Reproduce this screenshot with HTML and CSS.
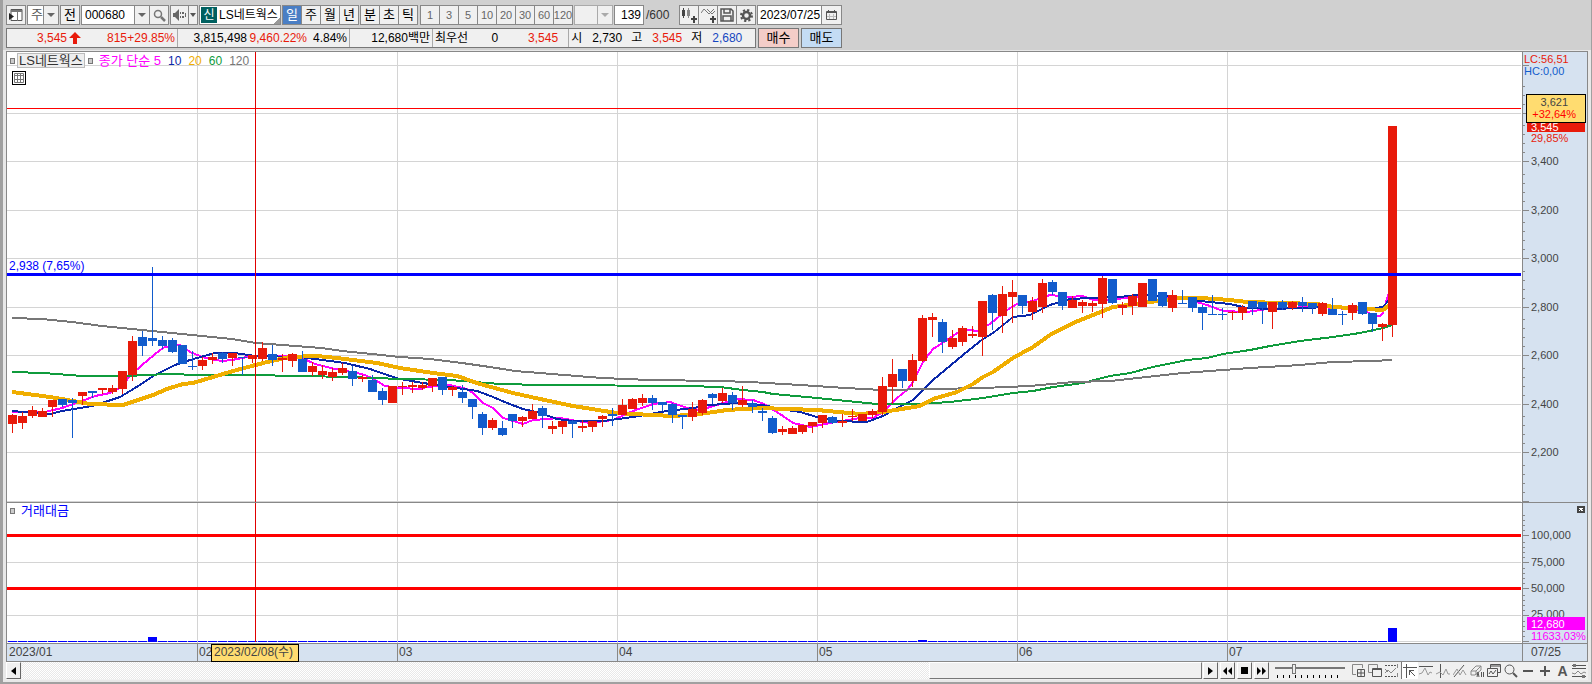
FILE: index.html
```
<!DOCTYPE html>
<html lang="ko">
<head>
<meta charset="utf-8">
<title>LS네트웍스 차트</title>
<link rel="stylesheet" href="styles.css">
</head>
<body>
<div class="window">
<header class="toolbar">
  <div class="row">
    <button class="btn" aria-label="패널"><svg width="14" height="14" viewBox="0 0 14 14"><path d="M2 1.500h11v11H2z" fill="#fff" stroke="#555"/><path d="M2 2h11v2H2zM8 4h1v9H8z" fill="#777"/><path d="M0 5l5 3.500-5 3.500z" fill="#222"/></svg></button>
    <label class="pick pick-unit"><select aria-label="구분"><option>주</option></select></label>
    <button class="btn">전</button>
    <div class="group">
      <label class="pick pick-code"><input class="code" type="text" value="000680" aria-label="종목코드"></label>
      <button class="btn" aria-label="검색"><svg width="13" height="13" viewBox="0 0 13 13" fill="none" stroke="#777"><circle cx="5" cy="5" r="3.500" stroke-width="1.500"/><path d="M8 8l4 4" stroke-width="2.500"/></svg></button>
    </div>
    <div class="group">
      <button class="btn btn-sound" aria-label="소리"><svg width="13" height="12" viewBox="0 0 13 12" fill="#666"><path d="M0 4h2l4-4v12L2 8H0zM7 3h1v2H7zM7 7h1v2H7zM9 3h2v2H9zM9 7h2v2H9zM12 4h1v4h-1z"/></svg></button>
      <button class="btn btn-drop" aria-label="소리 메뉴"><i class="tri"></i></button>
    </div>
    <div class="name"><b>신</b><span>LS네트웍스</span></div>
    <div class="group period">
      <button class="btn on">일</button><button class="btn">주</button><button class="btn">월</button><button class="btn">년</button>
    </div>
    <div class="group period">
      <button class="btn">분</button><button class="btn">초</button><button class="btn">틱</button>
    </div>
    <div class="group minutes">
      <button class="btn">1</button><button class="btn">3</button><button class="btn">5</button><button class="btn">10</button><button class="btn">20</button><button class="btn">30</button><button class="btn">60</button><button class="btn">120</button>
    </div>
    <label class="pick pick-off"><select disabled aria-label="분 선택"><option></option></select></label>
    <input class="count" type="text" value="139" aria-label="봉 개수">
    <span class="total">/600</span>
    <div class="group">
      <button class="btn" aria-label="봉 추가"><svg width="15" height="15" viewBox="0 0 15 15" fill="#444"><path d="M0 2h3v6H0zM1 0h1v10H1zM11 8h2v2h2v2h-2v3h-2v-3H9v-2h2z"/><path d="M5 2h3v6H5zM6 0h1v10H6z" fill="#888"/></svg></button>
      <button class="btn" aria-label="지표 추가"><svg width="15" height="15" viewBox="0 0 15 15" fill="none" stroke="#777"><path d="M0 5l3-4 5 5 5-5M6 1l5 5 3-3"/><path d="M11 8h2v2h2v2h-2v3h-2v-3H9v-2h2z" fill="#444" stroke="none"/></svg></button>
      <button class="btn" aria-label="저장"><svg width="14" height="14" viewBox="0 0 14 14" fill="none" stroke="#555" stroke-width="1.500"><path d="M1 1h10l2 2v10H1zM4 1v4h6V1M3 13V8h8v5"/></svg></button>
      <button class="btn" aria-label="설정"><svg width="13" height="13" viewBox="0 0 13 13" fill="none" stroke="#555"><circle cx="6.500" cy="6.500" r="3.500" stroke-width="2.500"/><circle cx="6.500" cy="6.500" r="5.500" stroke-width="2" stroke-dasharray="2.200 2.120"/></svg></button>
    </div>
    <div class="group date">
      <input type="text" value="2023/07/25" aria-label="날짜">
      <button class="btn" aria-label="달력"><svg width="11" height="10" viewBox="0 0 11 10" fill="none" stroke="#555"><path d="M.5 1.500h10v8H.5zM0 2.500h11M2.500 0v2M8.500 0v2"/><path d="M3.500 4v5M7.500 4v5M1 6.500h9" stroke="#bbb"/></svg></button>
    </div>
  </div>
  <div class="row">
    <div class="quote">
      <div class="cell"><span class="w60 up">3,545</span><svg class="arrow" width="12" height="12" viewBox="0 0 12 12"><path d="M6 0l6 6H8v6H4V6H0z" fill="#e81a0a"/></svg><span class="w44 up">815</span><span class="w48 up">+29.85%</span></div>
      <div class="cell"><span class="w70">3,815,498</span><span class="w60 up">9,460.22%</span><span class="w40">4.84%</span></div>
      <div class="cell"><span class="w80">12,680백만</span></div>
      <div class="cell bid"><span>최우선</span><span class="w30">0</span><span class="w60 up">3,545</span></div>
      <div class="cell ohl"><span>시</span><span class="w40">2,730</span><span>고</span><span class="w40 up">3,545</span><span>저</span><span class="w40 down">2,680</span></div>
    </div>
    <button class="trade buy">매수</button>
    <button class="trade sell">매도</button>
  </div>
</header>

<main class="chart">
  <section class="plot">
    <svg id="price" height="450" viewBox="7 52 1515 450" preserveAspectRatio="none"></svg>
    <div class="legend"><i class="dot"></i><span class="tag">LS네트웍스</span><i class="dot"></i><span class="ma5">종가 단순 5</span><span class="ma ma10">10</span><span class="ma ma20">20</span><span class="ma ma60">60</span><span class="ma ma120">120</span></div>
    <button class="sheet" aria-label="표"><svg width="10" height="10" viewBox="0 0 10 10" fill="none" stroke="#777"><path d="M.5.5h9v9h-9zM0 2.500h10M0 6.500h10M3.500 0v10M6.500 0v10"/></svg></button>
    <span class="level">2,938 (7,65%)</span>
  </section>
  <svg class="axis" id="priceAxis" width="64" height="450" viewBox="1523 52 64 450"></svg>
  <section class="plot second">
    <svg id="volume" height="140" viewBox="7 503 1515 140" preserveAspectRatio="none"></svg>
    <div class="legend"><i class="dot"></i><span class="vol">거래대금</span></div>
  </section>
  <svg class="axis second" id="volumeAxis" width="64" height="140" viewBox="1523 503 64 140"></svg>
  <div class="months"><span class="m1">2023/01</span><span>02</span><span>03</span><span>04</span><span>05</span><span>06</span><span>07</span><b class="cursor">2023/02/08(수)</b></div>
  <div class="last">07/25</div>
</main>

<footer class="bottom">
  <div class="scroll">
    <button class="sb" aria-label="왼쪽"><svg width="5" height="8" viewBox="0 0 5 8"><path d="M5 0v8L0 4z"/></svg></button>
    <div class="track"><div class="thumb"></div></div>
    <button class="sb" aria-label="오른쪽"><svg width="5" height="8" viewBox="0 0 5 8"><path d="M0 0v8l5-4z"/></svg></button>
  </div>
  <button class="sb" aria-label="뒤로"><svg width="9" height="8" viewBox="0 0 9 8"><path d="M4 0v8L0 4zM9 0v8L5 4z"/></svg></button>
  <button class="sb" aria-label="정지"><svg width="7" height="7" viewBox="0 0 7 7"><path d="M0 0h7v7H0z"/></svg></button>
  <button class="sb" aria-label="앞으로"><svg width="9" height="8" viewBox="0 0 9 8"><path d="M0 0v8l4-4zM5 0v8l4-4z"/></svg></button>
  <label class="speed"><input type="range" min="0" max="100" value="25" aria-label="속도"><i></i></label>
  <div class="tools">
    <button aria-label="창 추가"><svg viewBox="0 0 14 14"><path d="M5 10.500H1.500v-10h10V4" stroke="#888"/><path d="M6.500 5.500h7v7h-7zM10 6v7M7 9h7"/></svg></button>
    <button aria-label="창 겹치기"><svg viewBox="0 0 14 14"><path d="M4 8.500H.5v-8h9V4" stroke="#888"/><path d="M4.500 4.500h9v8h-9zM4 5.500h10"/></svg></button>
    <button aria-label="영역"><svg viewBox="0 0 14 14"><path d="M0 1.500h11M0 12.500h11" stroke-dasharray="2 1"/><path d="M12.500 0v4M12.500 9v4M0 9l3-3 3 3 5-5M0 5l3 3" stroke="#888"/></svg></button>
    <button class="pressed" aria-label="십자선"><svg viewBox="0 0 14 14"><path d="M0 3.500h14M3.500 0v14M6 6l6 6M6.500 11V6.500H11"/></svg></button>
    <button aria-label="수평선"><svg viewBox="0 0 14 14"><path d="M0 2.500h14"/><path d="M0 10l3-1 3-5 3 7 2-3 2 1" stroke="#999"/></svg></button>
    <button aria-label="수직선"><svg viewBox="0 0 14 14"><path d="M4.500 0v14"/><path d="M0 10l4-2 3 3 3-6 2 5 2 0" stroke="#999"/></svg></button>
    <button aria-label="추세선"><svg viewBox="0 0 14 14"><path d="M1 13L11 1"/><path d="M0 11l4-6 3 6 3-5 3 5" stroke="#999"/></svg></button>
    <button aria-label="전체 지우기"><svg viewBox="0 0 14 14"><path d="M1 7l5-5h5l-5 5zM1 7v4h4l6-5V2M6 7v4" stroke="#888"/><path d="M7 13l1-5 1 5M11.500 8v5M13.500 8v5"/></svg></button>
    <button aria-label="차트 겹침"><svg viewBox="0 0 14 14"><path d="M3.500 4V.5h10v8H11M.5 4.500h10v8H.5zM2 10l2-3 2 3 3-4"/><path d="M4 1h9v2H4z" fill="#999" stroke="none"/></svg></button>
    <button aria-label="돋보기"><svg viewBox="0 0 14 14"><circle cx="5.500" cy="5.500" r="4.500"/><path d="M9 9l4 4" stroke-width="2"/></svg></button>
    <button aria-label="축소"><svg viewBox="0 0 14 14"><path d="M2 7h10" stroke-width="2"/></svg></button>
    <button aria-label="확대"><svg viewBox="0 0 14 14"><path d="M2 7h10M7 2v10" stroke-width="2"/></svg></button>
    <button class="letter">A</button>
    <button aria-label="설정"><svg viewBox="0 0 14 14"><path d="M0 1.500h14M0 4.500h14M0 12.500h14" /><path d="M0 9l3 1 3-3 3 3 3-2 2 1" stroke="#888"/><path d="M1 0h3v3H1zM10 11h3v3h-3z" fill="#777" stroke="none"/></svg></button>
  </div>
</footer>
</div>
<script src="chart.js"></script>
</body>
</html>
```
FILE: styles.css
```
* { box-sizing: border-box; }
body {
  margin: 0;
  background: #f0f0f0;
  font: 12px/16px "Liberation Sans", "Noto Sans CJK KR", sans-serif;
  color: #000;
}
button, input, select { font: inherit; color: inherit; margin: 0; padding: 0; border-radius: 0; }
svg { display: block; flex: none; }

.window {
  display: flex;
  flex-direction: column;
  min-height: 100vh;
  border: solid #a0a0a0;
  border-width: 0 1px 2px 3px;
  background: #e8e8e8;
}

/* toolbar */
.toolbar {
  display: flex;
  flex-direction: column;
  gap: 3px;
  padding: 5px 3px 2px;
  border-bottom: 1px solid #e8e8e8;
  background: #d0d0d0;
  white-space: nowrap;
}
.row { display: flex; gap: 1px; height: 20px; }
.btn {
  display: flex;
  align-items: center;
  justify-content: center;
  flex: none;
  width: 20px;
  height: 20px;
  border: 1px solid #888;
  background: #f0f0f0;
}
.group { display: flex; }
.group > * + * { margin-left: -1px; }
.period, .pick-unit, .row > .btn { font-size: 13px; }
.group .on { background: #4a7ec4; color: #fff; }
.minutes { margin-left: 1px; color: #666; }
.minutes .btn { font-size: 11px; }
.pick { position: relative; display: block; border: 1px solid #888; background: #fff; }
.pick::after {
  content: "";
  position: absolute;
  right: 3px;
  top: 7px;
  border: 4px solid transparent;
  border-top: 4px solid #666;
}
.pick::before {
  content: "";
  position: absolute;
  right: 0;
  top: 0;
  width: 14px;
  height: 18px;
  border-left: 1px solid #888;
  background: #f0f0f0;
}
.pick select, .pick input { appearance: none; display: block; width: 100%; height: 18px; border: 0; background: none; padding-left: 3px; opacity: 1; }
.pick-unit { width: 32px; color: #555; }
.pick-code { width: 69px; }
.pick-off { width: 39px; background: #f0f0f0; border-color: #aaa; }
.pick-off::after { border-top-color: #aaa; }
.pick-off::before { border-color: #aaa; }
.btn-sound { width: 19px; }
.btn-drop { width: 10px; }
.tri { border: 3px solid transparent; border-top: 4px solid #555; border-bottom: 0; }
.name { display: flex; width: 82px; padding: 1px; border: 1px solid #888; background: linear-gradient(135deg, #fff 93%, #999 93%); }
.name b { width: 16px; background: #006060; color: #fff; font-weight: 400; text-align: center; }
.name span { padding-left: 2px; }
.count { width: 30px; border: 1px solid #888; background: #fff; text-align: right; padding-right: 2px; }
.total { width: 33px; padding: 2px 0 0 1px; color: #333; }
.date input { width: 65px; border: 1px solid #888; background: #fff; padding-left: 2px; }
.date .btn { width: 21px; }

.quote { display: flex; width: 750px; border: 1px solid #777; background: #f0f0f0; }
.cell { display: flex; align-items: center; padding-right: 2px; border-right: 1px solid #aaa; }
.cell:last-child { border: 0; }
.cell span { text-align: right; }
.w30 { width: 30px; }
.w40 { width: 40px; }
.w44 { width: 44px; }
.w48 { width: 48px; }
.w60 { width: 60px; }
.w70 { width: 69px; }
.w80 { width: 80px; }
.arrow { margin: 0 2px; }
.up { color: #e81a0a; }
.down { color: #1446c0; }
.bid { padding: 0 10px 0 2px; }
.ohl { padding-left: 2px; }
.ohl span:nth-child(odd):not(:first-child) { margin-left: 9px; }
.trade { width: 41px; border: 1px solid #777; margin-left: 1px; font-size: 13px; }
.buy { background: #f4cdc8; }
.sell { background: #c4dcf4; }

/* chart */
.chart {
  display: grid;
  grid-template-columns: minmax(0, 1fr) 65px;
  margin: 0 3px;
  border: 1px solid #888;
  background: #fff;
}
.plot { position: relative; }
.plot > svg { width: 100%; }
.axis { box-sizing: content-box; border-left: 1px solid #888; background: #d6e2f0; }
.second { border-top: 1px solid #888; }
.axis text { font-size: 11px; }
.legend {
  position: absolute;
  left: 3px;
  top: 1px;
  display: flex;
  align-items: center;
  font-size: 13px;
  line-height: 14px;
  white-space: nowrap;
}
.dot { width: 5px; height: 6px; border: 1px solid #777; background: #ccc; }
.tag { margin: 0 3px 0 2px; padding: 0 1px; border: 1px solid #bbb; background: #eee; line-height: 13px; color: #333; }
.ma { margin-left: 7px; font-size: 12px; }
.ma5 { margin-left: 6px; color: #f0f; }
.ma10 { color: #0a28aa; }
.ma20 { color: #f0ae00; }
.ma60 { color: #0f9b3c; }
.ma120 { color: #777; }
.vol { margin-left: 6px; color: #00f; }
.sheet { position: absolute; left: 5px; top: 19px; width: 14px; height: 14px; padding: 1px; border: 1px solid #000; background: #fff; }
.level { position: absolute; left: 2px; top: 206px; color: #00f; }
.months, .last { border-top: 1px solid #888; background: #d6e2f0; height: 18px; color: #444; line-height: 16px; }
.months { position: relative; display: grid; grid-template-columns: 190fr 200fr 220fr 200fr 200fr 210fr 295fr; }
.months span { padding-left: 1px; border-left: 1px solid #888; }
.months .m1 { border: 0; padding-left: 2px; }
.last { border-left: 1px solid #888; padding-left: 8px; }
.cursor { position: absolute; left: 204px; top: 0; width: 88px; height: 18px; border: 1px solid #000; background: #ffdc70; font-weight: 400; padding-left: 2px; line-height: 15px; white-space: nowrap; }

/* scroll bar and tools */
.bottom { display: flex; align-items: flex-start; gap: 2px; margin: 0 3px; height: 18px; background: #f0f0f0; }
.scroll { display: flex; flex: 1; gap: 1px; }
.track { flex: 1; background: repeating-conic-gradient(#e8e8e8 0 25%, #fff 0 50%) 0 0 / 2px 2px; }
.thumb { width: 273px; height: 17px; margin-left: auto; border: 1px solid; border-color: #fff #777 #777 #fff; background: #f0f0f0; }
.sb { display: flex; align-items: center; justify-content: center; width: 15px; height: 17px; border: 1px solid; border-color: #fff #666 #666 #fff; background: #f0f0f0; }
.speed { display: block; width: 70px; margin: 2px 3px 0 4px; }
.speed input { appearance: none; display: block; width: 70px; height: 10px; background: linear-gradient(#777, #777) 0 3px / 100% 2px no-repeat; }
.speed input::-webkit-slider-thumb { appearance: none; width: 4px; height: 10px; background: #eee; border: 1px solid #777; }
.speed i { display: block; height: 3px; margin: 1px 2px 0; background: repeating-linear-gradient(90deg, #000 0 1px, transparent 1px 6px); }
.tools { display: flex; flex: none; }
.tools button { width: 17px; height: 17px; padding: 1px; border: 0; background: none; }
.tools svg { width: 14px; height: 14px; fill: none; stroke: #555; }
.tools .pressed { background: #fff; border-left: 1px solid #777; }
.tools .letter { font: bold 14px "Liberation Sans", sans-serif; color: #555; }
```
FILE: chart.js
```
// Candle rows: direction, body top, body bottom, high, low
const candles = `R415,424,414,433 R416,423,412,429 R410,416,406,418 R411,417,408,417 R400,407,400,417 B399,405,399,407 B400,403,398,438 R392,396,392,405 B391,393,391,398 R388,390,388,394
R388,392,385,394 R371,389,371,394 R341,375,336,381 B337,346,331,356 B338,341,267,346 B340,346,336,349 B340,352,338,353 B345,364,345,364 B366,367,351,370 R360,366,357,370
R357,360,353,364 B353,359,352,363 R353,358,353,366 B357,358,357,375 R355,359,355,363 R348,359,342,361 B354,360,345,366 R358,360,354,372 R354,361,353,367 B359,372,351,372
R366,372,362,376 R371,375,365,379 R372,377,368,381 R368,373,363,375 B371,379,366,386 R377,379,375,382 B380,392,375,392 B391,400,388,405 R386,403,386,403 R386,387,382,395
R385,387,382,393 R385,388,382,390 R378,386,378,392 B377,390,377,395 R387,390,386,396 B392,398,385,403 B399,407,399,419 B414,428,412,435 R420,428,418,430 B428,435,421,436
B414,421,414,428 R417,421,416,427 R411,419,404,419 B408,416,406,428 R426,429,421,434 R421,427,421,434 B421,424,420,438 R426,428,420,432 R421,427,421,432 R416,419,415,427
B414,416,408,426 R405,415,399,415 R399,409,398,409 R398,403,394,406 B398,403,395,410 B402,405,402,411 B404,415,403,423 B415,417,415,429 R409,417,402,421 R400,413,399,415
B394,398,393,404 R393,401,388,403 B395,403,392,410 R400,405,386,407 B403,407,400,413 B411,413,408,421 B418,433,416,434 R429,432,426,435 R428,434,426,434 R425,432,425,434
R422,426,422,433 R415,423,415,428 B417,423,416,424 R421,423,414,427 R416,417,409,421 R414,421,414,421 R411,415,409,418 R386,412,377,415 R374,387,359,404 B369,381,369,388
R360,381,354,387 R318,361,315,362 R317,320,313,337 B322,342,319,353 R338,347,330,349 R328,342,326,346 R334,336,326,338 R301,337,301,356 B295,313,294,330 R294,316,286,333
R292,297,280,323 B295,306,295,314 R301,312,297,320 R283,307,279,313 B282,292,280,295 B292,306,292,310 R300,308,296,308 R302,306,300,313 R303,306,301,312 R278,304,276,318
B279,303,279,304 R305,308,302,315 R296,306,294,315 R283,307,283,307 B279,301,279,301 B292,306,292,307 R295,308,290,312 B303,304,290,304 B297,308,297,312 B307,313,305,330
B314,315,295,315 B314,315,308,320 R312,313,311,320 R307,313,305,320 B301,308,301,315 B302,308,302,324 R302,312,302,329 B302,308,300,310 R302,308,301,310 B302,306,297,312
B303,308,303,314 R303,314,302,316 B309,315,298,315 B314,315,311,325 R305,313,303,320 B302,314,302,315 B313,324,313,332 R324,327,323,341 R126,325,126,337`.split(/\s+/);

const averages = [
  ['#f0f', 2, '12,412 45,412 62,408 82,401 95,396 110,393 120,388 130,376 142,365 160,350 165,347 180,345 190,352 205,358 222,361 232,360 252,356 282,356 302,358 315,364 335,369 362,374 372,378 385,386 400,388 420,389 427,387 450,385 467,389 473,393 483,403 493,408 503,418 523,424 533,420 560,418 577,421 590,423 613,420 633,411 653,404 670,402 687,408 700,410 707,408 720,404 737,399 753,400 764,404 783,416 793,423 810,427 830,423 860,418 873,418 883,412 897,398 907,390 913,382 923,362 933,349 947,340 963,329 977,331 990,324 1007,310 1017,304 1033,301 1050,295 1070,297 1083,296 1093,300 1103,300 1127,298 1150,295 1167,297 1187,299 1210,306 1223,311 1247,312 1267,309 1293,308 1313,306 1333,308 1363,310 1373,315 1380,316 1383,313 1386,302 1389,293'],
  ['#0a28aa', 2, '12,411 50,414 62,411 92,406 105,402 120,397 135,388 155,375 175,365 190,360 215,353 235,353 255,356 300,357 315,359 345,363 370,369 390,376 400,379 423,383 450,387 477,391 493,397 507,403 523,409 540,413 557,419 573,421 603,421 633,417 667,411 693,408 710,405 737,403 763,405 780,409 800,412 817,417 837,421 867,422 883,416 897,408 913,400 933,380 963,355 983,339 993,333 1013,317 1030,315 1050,305 1070,299 1110,297 1120,297 1137,295 1167,296 1200,301 1230,304 1247,308 1273,309 1300,308 1333,307 1367,309 1383,307 1389,300'],
  ['#0f9b3c', 2, '12,372 43,373 83,376 127,376 167,374 200,375 250,375 300,376 350,377 400,379 450,380 500,384 543,385 687,386 720,387 743,390 763,392 773,394 817,398 877,404 920,404 950,402 983,398 1013,393 1033,391 1053,387 1083,383 1110,376 1130,373 1153,367 1187,360 1207,358 1223,354 1250,350 1270,346 1300,341 1333,337 1360,333 1383,328 1392,325'],
  ['#777', 2, '12,318 42,319 72,322 102,326 132,329 152,331 192,335 232,339 256,343 282,345 322,348 342,351 372,354 400,357 430,359 462,363 490,367 515,371 552,374 602,378 650,380 720,381 750,382 800,385 830,387 863,389 883,390 933,389 983,388 1030,386 1073,382 1110,381 1147,377 1183,373 1223,370 1250,368 1300,365 1333,362 1373,361 1392,360'],
  ['#f0ae00', 4, '12,392 50,397 90,404 123,405 153,395 167,389 183,384 193,383 233,371 267,362 290,357 317,356 337,358 377,363 400,368 433,373 457,376 480,384 513,393 540,399 573,406 617,413 633,414 673,416 700,414 727,410 760,408 817,410 860,414 883,412 920,406 933,399 957,392 973,384 983,377 993,372 1013,358 1033,347 1050,335 1073,323 1093,315 1113,307 1150,302 1180,298 1200,298 1230,300 1247,302 1317,304 1333,307 1367,309 1383,310 1392,303']
];
const months = [197, 397, 617, 817, 1017, 1227];

const rect = (x, y, w, h, fill) => `<rect x="${x}" y="${y}" width="${w}" height="${h}" fill="${fill}"/>`;
const text = (x, y, s, fill = '#444', anchor = 'start') => `<text x="${x}" y="${y}" fill="${fill}" text-anchor="${anchor}">${s}</text>`;
const draw = (id, parts) => {
  document.getElementById(id).innerHTML = parts.map(p => p.startsWith('<text') ? p : `<g shape-rendering="crispEdges">${p}</g>`).join('');
};

const rows = [65, 113, 161, 210, 258, 307, 355, 404, 452, 501];
const price = rows.map(y => rect(7, y, 1514, 1, '#d4d4d4'));
months.forEach(x => price.push(rect(x, 52, 1, 450, '#d4d4d4')));
averages.forEach(([color, width, points]) => {
  price.push(`<polyline points="${points}" fill="none" stroke="${color}" stroke-width="${width}"/>`);
});
candles.forEach((c, i) => {
  const [top, bottom, high, low] = c.slice(1).split(',').map(Number);
  const color = c[0] === 'R' ? '#e81a0a' : '#125ccc';
  price.push(rect(12 + 10 * i, high, 1, low - high, color), rect(8 + 10 * i, top, 9, bottom - top, color));
});
price.push(rect(7, 273, 1514, 3, '#00f'), rect(7, 108, 1514, 1, '#f00'), rect(255, 52, 1, 450, '#e00000'));
draw('price', price);

const axis = [];
rows.forEach(y => {
  axis.push(rect(1523, y, 6, 1, '#888'));
  [9, 18, 27, 36].forEach(d => y - d > 85 && axis.push(rect(1523, y - d, 2, 1, '#888')));
});
['3,400', '3,200', '3,000', '2,800', '2,600', '2,400', '2,200'].forEach((s, i) => axis.push(text(1531, rows[i + 2] + 4, s)));
axis.push(
  text(1524, 63, 'LC:56,51', '#e81a0a'), text(1524, 75, 'HC:0,00', '#125ccc'),
  rect(1527, 122, 58, 10, '#e81a0a'), text(1531, 131, '3,545', '#fff'), text(1531, 142, '29,85%', '#e81a0a'),
  rect(1526, 94, 60, 29, '#000'), rect(1527, 95, 58, 27, '#ffdc70'),
  text(1568, 106, '3,621', '#444', 'end'), text(1576, 118, '+32,64%', '#f00', 'end')
);
draw('priceAxis', axis);

const volume = [562, 615, 641].map(y => rect(7, y, 1514, 1, '#d4d4d4'));
months.forEach(x => volume.push(rect(x, 503, 1, 140, '#d4d4d4')));
candles.forEach((c, i) => {
  const h = { 14: 5, 91: 2, 138: 14 }[i] || 1;
  volume.push(rect(8 + 10 * i, 642 - h, 9, h, '#00f'));
});
volume.push(rect(7, 534, 1514, 3, '#f00'), rect(7, 587, 1514, 3, '#f00'), rect(255, 503, 1, 139, '#e00000'));
draw('volume', volume);

const vAxis = [];
[535, 562, 588, 615, 641].forEach(y => {
  vAxis.push(rect(1523, y, 6, 1, '#888'));
  [5, 10, 15, 20].forEach(d => vAxis.push(rect(1523, y - d, 2, 1, '#888')));
});
vAxis.push(
  text(1531, 539, '100,000'), text(1531, 566, '75,000'), text(1531, 592, '50,000'), text(1531, 618, '25,000'),
  rect(1527, 617, 58, 13, '#f0f'), text(1531, 628, '12,680', '#fff'), text(1531, 640, '11633,03%', '#f0f'),
  rect(1577, 506, 8, 7, '#444'),
  '<path d="M1579 508l4 3M1583 508l-4 3" stroke="#fff"/>'
);
draw('volumeAxis', vAxis);
```
